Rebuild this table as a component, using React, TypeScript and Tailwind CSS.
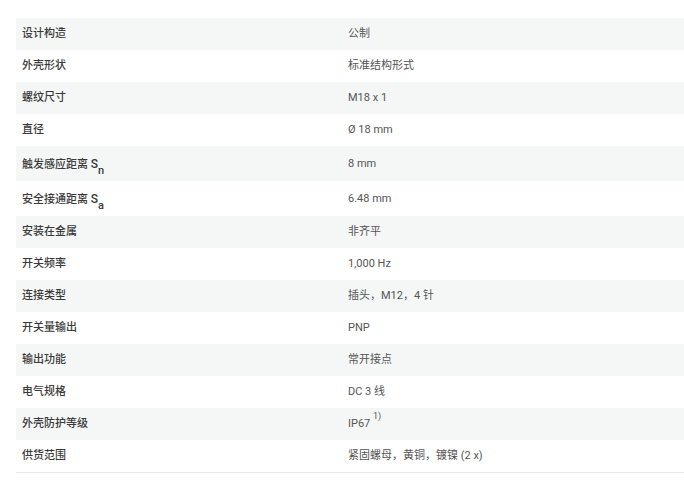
import React from "react";

type Row = { label: React.ReactNode; value: React.ReactNode; tall?: boolean };

const rows: Row[] = [
  { label: "设计构造", value: "公制" },
  { label: "外壳形状", value: "标准结构形式" },
  { label: "螺纹尺寸", value: "M18 x 1" },
  { label: "直径", value: "Ø 18 mm" },
  {
    label: (
      <>
        触发感应距离 <span className="text-[12px]">S</span>
        <sub className="text-[11px] align-[-3px]">n</sub>
      </>
    ),
    value: "8 mm",
    tall: true,
  },
  {
    label: (
      <>
        安全接通距离 <span className="text-[12px]">S</span>
        <sub className="text-[11px] align-[-3px]">a</sub>
      </>
    ),
    value: "6.48 mm",
    tall: true,
  },
  { label: "安装在金属", value: "非齐平" },
  { label: "开关频率", value: "1,000 Hz" },
  { label: "连接类型", value: "插头，M12，4 针" },
  { label: "开关量输出", value: "PNP" },
  { label: "输出功能", value: "常开接点" },
  { label: "电气规格", value: "DC 3 线" },
  {
    label: "外壳防护等级",
    value: (
      <>
        IP67 <sup className="text-[9px] align-[4px]">1)</sup>
      </>
    ),
  },
  { label: "供货范围", value: "紧固螺母，黄铜，镀镍 (2 x)" },
];

export default function App() {
  return (
    <div className="min-h-[482px] bg-white pt-[18px] pl-4 font-['Roboto','Noto_Sans_CJK_SC',sans-serif] text-[11px]">
      <div className="border-b border-[#e6e8e8]">
        {rows.map((row, i) => (
          <div
            key={i}
            className={`grid grid-cols-[326px_1fr] items-center pt-px ${
              row.tall ? "h-[35px]" : "h-8"
            } ${i % 2 === 0 ? "bg-[#f5f7f7]" : "bg-white"}`}
          >
            <div className="pl-1.5 font-medium text-[#3a3a3a]">{row.label}</div>
            <div className="pl-1.5 text-[#555]">{row.value}</div>
          </div>
        ))}
      </div>
    </div>
  );
}
